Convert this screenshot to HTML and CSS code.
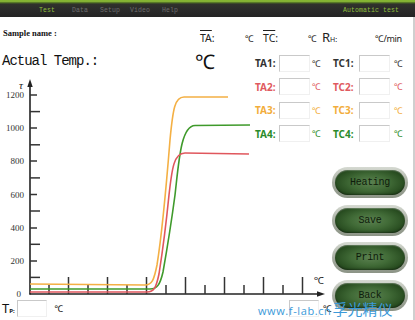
FILE: index.html
```html
<!DOCTYPE html>
<html>
<head>
<meta charset="utf-8">
<link rel="stylesheet" href="styles.css">
</head>
<body>
<div class="screen">
  <div class="menubar">
    <span class="m m-test on">Test</span>
    <span class="m m-data">Data</span>
    <span class="m m-setup">Setup</span>
    <span class="m m-video">Video</span>
    <span class="m m-help">Help</span>
    <span class="m m-auto on">Automatic test</span>
  </div>
  <div class="stage">
    <svg class="chart" viewBox="0 17 415 303" xmlns="http://www.w3.org/2000/svg">
      <g class="axis">
        <line x1="30" y1="84" x2="30" y2="294.5"/>
        <line x1="29.5" y1="294" x2="320" y2="294"/>
      </g>
      <polygon points="30,79 27.3,87 32.7,87" fill="#222"/>
      <polygon points="325,294 317,291.2 317,296.8" fill="#222"/>
      <g class="ticks">
        <line x1="30" y1="95" x2="37" y2="95"/>
        <line x1="30" y1="111.6" x2="40" y2="111.6"/>
        <line x1="30" y1="128" x2="37" y2="128"/>
        <line x1="30" y1="144.8" x2="40" y2="144.8"/>
        <line x1="30" y1="161" x2="37" y2="161"/>
        <line x1="30" y1="177.9" x2="40" y2="177.9"/>
        <line x1="30" y1="194.5" x2="37" y2="194.5"/>
        <line x1="30" y1="211" x2="40" y2="211"/>
        <line x1="30" y1="228" x2="37" y2="228"/>
        <line x1="30" y1="244.3" x2="40" y2="244.3"/>
        <line x1="30" y1="261" x2="37" y2="261"/>
        <line x1="30" y1="277.4" x2="40" y2="277.4"/>
        <line x1="49" y1="294" x2="49" y2="285"/>
        <line x1="68.5" y1="294" x2="68.5" y2="277"/>
        <line x1="88" y1="294" x2="88" y2="285"/>
        <line x1="107.5" y1="294" x2="107.5" y2="277"/>
        <line x1="127" y1="294" x2="127" y2="285"/>
        <line x1="146.5" y1="294" x2="146.5" y2="277"/>
        <line x1="166" y1="294" x2="166" y2="285"/>
        <line x1="185.5" y1="294" x2="185.5" y2="277"/>
        <line x1="205" y1="294" x2="205" y2="285"/>
        <line x1="224.5" y1="294" x2="224.5" y2="277"/>
        <line x1="244" y1="294" x2="244" y2="285"/>
        <line x1="263.5" y1="294" x2="263.5" y2="277"/>
        <line x1="283" y1="294" x2="283" y2="285"/>
        <line x1="302.5" y1="294" x2="302.5" y2="277"/>
      </g>
      <g class="ylabels">
        <text x="24" y="98">1200</text>
        <text x="24" y="131">1000</text>
        <text x="24" y="164">800</text>
        <text x="24" y="197.5">600</text>
        <text x="24" y="231">400</text>
        <text x="24" y="264">200</text>
        <text x="21" y="297">0</text>
      </g>
      <text class="tau" x="19" y="89">τ</text>
      <text class="xunit" x="314" y="284">℃</text>
      <path class="curve c-orange" d="M30,284 L145,285 C152,285 154,280 157,265 C161,240 166,190 170,140 C173,108 175,97 184,97 L228,97"/>
      <path class="curve c-green" d="M30,289 L150,289 C157,289 160,285 163,272 C166,255 171,225 175,195 C179,160 181,126 195,125.5 L250,125"/>
      <path class="curve c-red" d="M30,292 L147,292 C154,292 156,288 159,274 C162,255 166,225 169,195 C172,168 174,153 185,153 L249,154"/>
    </svg>

    <div class="overlay">
      <div class="head">
        <div class="sample">Sample name :</div>
        <div class="readouts">
          <span class="ro ro-ta"><span class="ov">TA</span>:</span>
          <span class="unit unit-ta">℃</span>
          <span class="ro ro-tc"><span class="ov">TC</span>:</span>
          <span class="unit unit-tc">℃</span>
          <span class="ro ro-rh"><span class="r">R</span><span class="h">H:</span></span>
          <span class="unit unit-rate">℃/min</span>
        </div>
      </div>
      <div class="main">
        <div class="temp">
          <span class="temp-label">Actual Temp.:</span>
          <span class="temp-unit">℃</span>
        </div>
        <div class="readings">
          <span class="lbl k1">TA1:</span><span class="box"></span><span class="u k1">℃</span>
          <span class="lbl k1">TC1:</span><span class="box"></span><span class="u u-end k1">℃</span>
          <span class="lbl k2">TA2:</span><span class="box"></span><span class="u k2">℃</span>
          <span class="lbl k2">TC2:</span><span class="box"></span><span class="u u-end k2">℃</span>
          <span class="lbl k3">TA3:</span><span class="box"></span><span class="u k3">℃</span>
          <span class="lbl k3">TC3:</span><span class="box"></span><span class="u u-end k3">℃</span>
          <span class="lbl k4">TA4:</span><span class="box"></span><span class="u k4">℃</span>
          <span class="lbl k4">TC4:</span><span class="box"></span><span class="u u-end k4">℃</span>
        </div>
        <div class="tpbar">
          <span class="tp"><span class="tp-t">T</span><span class="tp-p">P:</span></span>
          <span class="box box-tp"></span>
          <span class="tp-unit">℃</span>
          <span class="box box-end"></span>
          <span class="tp-unit tp-unit-end">℃</span>
        </div>
        <div class="buttons">
          <div class="btn"><span>Heating</span></div>
          <div class="btn"><span>Save</span></div>
          <div class="btn"><span>Print</span></div>
          <div class="btn"><span>Back</span></div>
        </div>
      </div>
    </div>

    <div class="watermark">www.f-lab.cn<span class="cn">孚光精仪</span></div>
  </div>
</div>
</body>
</html>
```

FILE: styles.css
```css
html, body {
  margin: 0;
  padding: 0;
  background: #fff;
}

.screen {
  width: 415px;
  height: 320px;
  overflow: hidden;
  position: relative;
  background: #fff;
}

/* ---------- menu bar ---------- */
.menubar {
  height: 17px;
  box-sizing: border-box;
  padding-top: 3px;
  display: flex;
  align-items: center;
  background: linear-gradient(#6f9f27 0, #9acb3c 1px, #587a26 2.5px, #30322c 4px, #2a2a2a 60%, #232323 100%);
  font: 6.5px "Liberation Mono", monospace;
  color: #6e6e6e;
  letter-spacing: 0.1px;
}

.m { white-space: nowrap; }
.m.on { color: #8fbf3c; }
.m-test { margin-left: 39px; }
.m-data { margin-left: 17px; }
.m-setup { margin-left: 12px; }
.m-video { margin-left: 10px; }
.m-help { margin-left: 12px; }
.m-auto { margin-left: auto; margin-right: 16px; }

/* ---------- stage ---------- */
.stage {
  position: relative;
  display: grid;
  height: 303px;
  border-right: 2px solid #cfcfcf;
  box-sizing: border-box;
}

.stage > .chart,
.stage > .overlay {
  grid-area: 1 / 1;
}

.chart {
  display: block;
  width: 415px;
  height: 303px;
}

.axis line { stroke: #222; stroke-width: 1.6; }
.ticks line { stroke: #333; stroke-width: 1.5; }
.ylabels text {
  font: 9px "Liberation Serif", serif;
  fill: #333;
  text-anchor: end;
}
.tau { font: italic 11px "Liberation Serif", serif; fill: #222; }
.xunit { font: 10px "Noto Sans", sans-serif; fill: #222; }

.curve { fill: none; stroke-width: 1.6; stroke-linejoin: round; }
.c-orange { stroke: #f4b044; }
.c-green { stroke: #3f9a2b; }
.c-red { stroke: #e0575d; }

/* ---------- overlay ---------- */
.overlay {
  display: flex;
  flex-direction: column;
  min-width: 0;
}

.head {
  height: 30px;
  display: flex;
  align-items: flex-start;
}

.sample {
  width: 200px;
  box-sizing: border-box;
  padding: 11px 0 0 3px;
  font: bold 8.5px/10px "Liberation Serif", serif;
  color: #111;
}

.readouts {
  display: flex;
  align-items: baseline;
  padding-top: 13px;
  font: 10.5px/14px "Noto Sans", sans-serif;
  color: #222;
}

.ro { display: inline-block; }
.ov { text-decoration: overline; text-decoration-thickness: 1px; }
.ro-ta { width: 45px; }
.ro-tc { width: 45px; }
.ro-rh { width: 53px; }
.r { font-size: 13px; }
.h { font-size: 7px; }
.unit { font-size: 9px; }
.unit-ta { width: 18px; }
.unit-tc { width: 14px; }
.unit-rate { letter-spacing: -0.4px; }

.main {
  flex: 1;
  display: grid;
  grid-template-columns: 250px 82px 81px;
  grid-template-rows: 95px 1fr;
}

.temp {
  grid-column: 1;
  grid-row: 1;
  display: flex;
  align-items: center;
  align-self: start;
  margin-top: 5px;
  height: 18px;
}

.temp-label {
  width: 195px;
  box-sizing: border-box;
  padding-left: 2px;
  font: 14px "Liberation Mono", monospace;
  letter-spacing: -1px;
  color: #111;
}

.temp-unit {
  font: 20px "Noto Sans", sans-serif;
  color: #111;
}

.readings {
  grid-column: 2 / 4;
  grid-row: 1;
  align-self: start;
  display: grid;
  grid-template-columns: 24px 31px 23px 26px 31px 1fr;
  grid-auto-rows: 17px;
  row-gap: 6.5px;
  align-items: center;
  padding: 7.5px 0 0 5px;
  font-family: "Noto Sans", sans-serif;
}

.lbl { font-size: 10px; font-weight: bold; white-space: nowrap; }
.u { font-size: 9px; padding-left: 2px; }
.u-end { padding-left: 4px; }
.k1 { color: #333; }
.k2 { color: #e05a60; }
.k3 { color: #f2ad3c; }
.k4 { color: #2b8c2b; }

.box {
  display: block;
  height: 17px;
  box-sizing: border-box;
  background: #fff;
  border-top: 1px solid #c9c9c9;
  border-left: 1px solid #c9c9c9;
  border-right: 1px solid #f0f0f0;
  border-bottom: 1px solid #f0f0f0;
}

.tpbar {
  grid-column: 1 / 3;
  grid-row: 2;
  align-self: end;
  display: flex;
  align-items: center;
  height: 18px;
  margin-bottom: 3px;
  padding-left: 2px;
  font-family: "Noto Sans", sans-serif;
  color: #111;
}

.tp { width: 15px; display: inline-flex; align-items: baseline; }
.tp-t { font-size: 13px; }
.tp-p { font-size: 6px; font-weight: bold; }
.box-tp { width: 31px; }
.tp-unit { font-size: 9px; margin-left: 7px; }
.box-end { width: 30px; margin-left: 226px; }
.tp-unit-end { margin-left: 4px; }

.buttons {
  grid-column: 3;
  grid-row: 2;
  display: flex;
  flex-direction: column;
  gap: 6.5px;
  padding-top: 25px;
}

.btn {
  width: 76px;
  height: 31px;
  box-sizing: border-box;
  padding: 3px;
  border-radius: 16px;
  background: linear-gradient(#d6dad2, #a4aa9e 55%, #8c9486);
}

.btn span {
  display: flex;
  align-items: center;
  justify-content: center;
  height: 100%;
  border-radius: 13px;
  background: radial-gradient(ellipse 60% 70% at 50% 50%, #5b8150 0%, #416b37 45%, #2a4f22 80%, #1d3a17 100%);
  box-shadow: inset 0 1px 1px rgba(255, 255, 255, 0.25), inset 0 -1px 2px rgba(0, 0, 0, 0.35);
  font: 10px "Liberation Mono", monospace;
  letter-spacing: -0.3px;
  color: #0e1c0b;
}

.watermark {
  position: absolute;
  left: 258px;
  top: 283px;
  font: 11px/18px "Open Sans", "Noto Sans", sans-serif;
  color: #3b9ad9;
  letter-spacing: 0.6px;
  white-space: nowrap;
}

.watermark .cn {
  font: 15px/18px "Noto Sans CJK SC", sans-serif;
  letter-spacing: 0;
  margin-left: 1px;
}
```
